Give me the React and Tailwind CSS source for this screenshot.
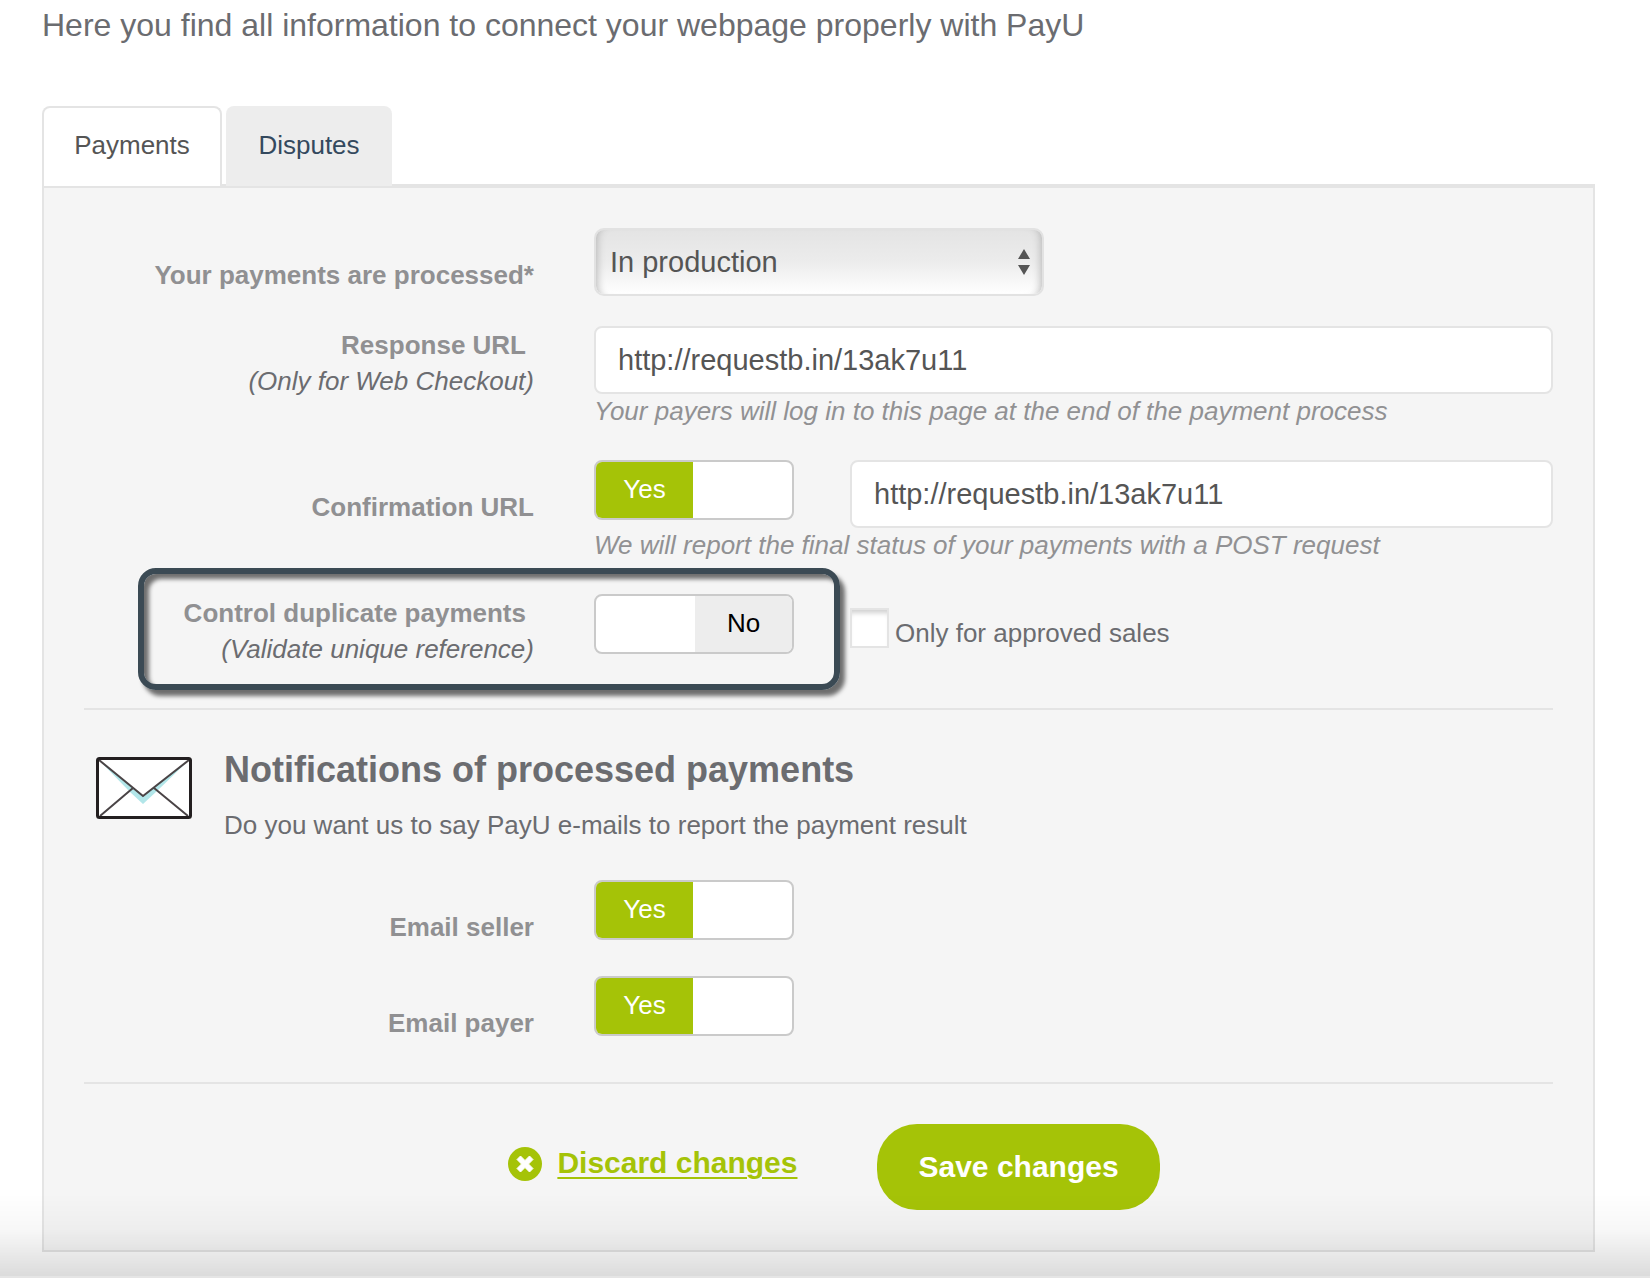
import { useState } from "react";

function Toggle({ id, initial }) {
  const [on, setOn] = useState(initial);
  return (
    <label className="relative flex h-[60px] w-[200px] shrink-0 cursor-pointer overflow-hidden rounded-lg border-2 border-[#cacaca] bg-white text-[26px] leading-[54px]">
      <input
        id={id}
        type="checkbox"
        className="sr-only"
        checked={on}
        onChange={(e) => setOn(e.target.checked)}
      />
      {on ? (
        <span className="w-[97px] bg-[#a5c307] text-center text-white">Yes</span>
      ) : (
        <span className="ml-auto w-[97px] bg-[#ededed] text-center text-black">No</span>
      )}
    </label>
  );
}

function Row({ children }) {
  return <div className="relative grid grid-cols-[450px_minmax(0,1fr)] gap-x-[60px]">{children}</div>;
}

function FieldLabel({ htmlFor, children }) {
  return (
    <label htmlFor={htmlFor} className="pt-[29px] text-right font-bold text-[#909092]">
      {children}
    </label>
  );
}

function StackedLabel({ htmlFor, title, note }) {
  return (
    <label htmlFor={htmlFor} className="pt-px text-right">
      <span className="block pr-2 font-bold text-[#909092]">{title}</span>
      <em className="block text-[#6b6c70]">{note}</em>
    </label>
  );
}

function UrlInput({ id, label }) {
  return (
    <input
      id={id}
      type="text"
      aria-label={label}
      defaultValue="http://requestb.in/13ak7u11"
      className="h-[68px] w-full min-w-0 rounded-lg border-2 border-[#e4e4e4] bg-white px-[22px] text-[29px] text-[#555]"
    />
  );
}

function Envelope() {
  return (
    <svg viewBox="0 0 96 62" className="mt-[9px] h-[62px] w-24 shrink-0" aria-hidden="true">
      <rect x="1.5" y="1.5" width="93" height="59" rx="2" fill="#fff" />
      <path d="M3 3 L34 35 L47 47 L61 34 L93 3 L47 39 Z" fill="#b2e6e9" />
      <path d="M3 3 L47 39 L93 3 M37 31 L4 59 M58 31 L92 59" fill="none" stroke="#4a4446" strokeWidth="2" />
      <rect x="1.5" y="1.5" width="93" height="59" rx="2" fill="none" stroke="#231f20" strokeWidth="3" />
    </svg>
  );
}

function DiscardIcon() {
  return (
    <svg viewBox="0 0 34 34" className="mt-0.5 size-[34px]" aria-hidden="true">
      <circle cx="17" cy="17" r="17" fill="#a5c307" />
      <path
        d="M12.5 9 L17 13.5 L21.5 9 L25 12.5 L20.5 17 L25 21.5 L21.5 25 L17 20.5 L12.5 25 L9 21.5 L13.5 17 L9 12.5 Z"
        fill="#fff"
        stroke="#fff"
        strokeWidth="1"
        strokeLinejoin="round"
      />
    </svg>
  );
}

export default function App() {
  return (
    <main className="relative min-h-screen bg-white px-[42px] pt-[5px] pb-[26px] font-['Liberation_Sans',Arial,sans-serif] text-[26px] leading-9 text-[#6b6c70]">
      <h1 className="text-[32px] leading-10">
        Here you find all information to connect your webpage properly with PayU
      </h1>

      <div className="mr-[13px]">
        <div role="tablist" className="mt-[61px] flex gap-1 border-b-2 border-[#e4e4e4]">
          <button
            role="tab"
            aria-selected="true"
            className="-mb-0.5 h-20 w-[180px] rounded-t-lg border-2 border-b-0 border-[#e4e4e4] bg-white text-[#555]"
          >
            <span className="block pb-1">Payments</span>
          </button>
          <button
            role="tab"
            aria-selected="false"
            className="-mb-0.5 h-20 w-[166px] rounded-t-lg border-t-2 border-[#ededed] bg-[#ededed] text-[#34495e]"
          >
            <span className="block pb-1">Disputes</span>
          </button>
        </div>

        <form
          onSubmit={(e) => e.preventDefault()}
          className="border-2 border-[#e4e4e4] bg-[#f5f5f5] px-10 pt-10 pb-10"
        >
          <div className="flex flex-col gap-[30px]">
            <Row>
              <FieldLabel htmlFor="mode">Your payments are processed*</FieldLabel>
              <div className="relative w-[450px]">
                <select
                  id="mode"
                  className="h-[68px] w-full appearance-none rounded-[10px] border-2 border-[#e2e2e2] bg-linear-to-b from-[#e4e4e4] via-[#ececec] to-white px-3.5 text-[29px] text-[#555] shadow-[inset_9px_0_8px_-8px_#b4b4b4,inset_-9px_0_8px_-8px_#b4b4b4]"
                >
                  <option>In production</option>
                </select>
                <svg
                  viewBox="0 0 12 26"
                  className="pointer-events-none absolute top-[21px] right-3.5 h-[26px] w-3"
                  aria-hidden="true"
                >
                  <path d="M6 0 L12 10 H0 Z M6 26 L12 16 H0 Z" fill="#555" />
                </svg>
              </div>
            </Row>

            <Row>
              <StackedLabel htmlFor="response" title="Response URL" note="(Only for Web Checkout)" />
              <div className="flex flex-col">
                <UrlInput id="response" />
                <em className="pb-0.5 leading-[34px] text-[#919193]">
                  Your payers will log in to this page at the end of the payment process
                </em>
              </div>
            </Row>

            <Row>
              <FieldLabel htmlFor="confirm">Confirmation URL</FieldLabel>
              <div>
                <div className="flex gap-14">
                  <Toggle id="confirm" initial={true} />
                  <UrlInput id="confirm-url" label="Confirmation URL address" />
                </div>
                <em className="block pb-0.5 leading-[34px] text-[#919193]">
                  We will report the final status of your payments with a POST request
                </em>
              </div>
            </Row>

            <Row>
              <StackedLabel
                htmlFor="duplicates"
                title="Control duplicate payments"
                note="(Validate unique reference)"
              />
              <div className="flex items-start gap-14">
                <Toggle id="duplicates" initial={false} />
                <label className="flex items-start gap-1.5 pt-3.5">
                  <input
                    type="checkbox"
                    className="h-10 w-[39px] appearance-none border-2 border-[#e4e4e4] bg-white shadow-[inset_0_6px_5px_-3px_#d0d0d0] checked:bg-[#a5c307]"
                  />
                  <span className="pt-[7px]">Only for approved sales</span>
                </label>
              </div>
              <div className="pointer-events-none absolute -top-[26px] left-[54px] h-[122px] w-[702px] rounded-[18px] border-6 border-[#3b4a54] shadow-[5px_6px_4px_#6e6e6e,inset_5px_5px_4px_#6e6e6e]" />
            </Row>
          </div>

          <hr className="mt-[41px] border-t-2 border-[#e4e4e4]" />

          <section>
            <div className="mt-[38px] ml-3 flex gap-8">
              <Envelope />
              <div>
                <h2 className="text-[36px] leading-[44px] font-bold">Notifications of processed payments</h2>
                <p className="mt-[15px]">Do you want us to say PayU e-mails to report the payment result</p>
              </div>
            </div>
            <div className="mt-[37px] flex flex-col gap-[31px]">
              <Row>
                <FieldLabel htmlFor="seller">Email seller</FieldLabel>
                <Toggle id="seller" initial={true} />
              </Row>
              <Row>
                <FieldLabel htmlFor="payer">Email payer</FieldLabel>
                <Toggle id="payer" initial={true} />
              </Row>
            </div>
          </section>

          <hr className="mt-[41px] border-t-2 border-[#e4e4e4]" />

          <div className="mt-10 flex items-center justify-center gap-20 pl-[31px] text-[30px] font-bold">
            <a href="#discard" className="mb-2 flex items-center gap-[15px] text-[#a5c307]">
              <DiscardIcon />
              <span className="underline decoration-2 underline-offset-4">Discard changes</span>
            </a>
            <button type="submit" className="h-[86px] rounded-[40px] bg-[#a5c307] px-[41px] text-white">
              Save changes
            </button>
          </div>
        </form>
      </div>

      <div className="pointer-events-none absolute inset-x-0 bottom-0 h-[84px] border-b-2 border-black/10 bg-linear-to-b from-black/0 via-black/3 via-45% to-black/14" />
    </main>
  );
}
